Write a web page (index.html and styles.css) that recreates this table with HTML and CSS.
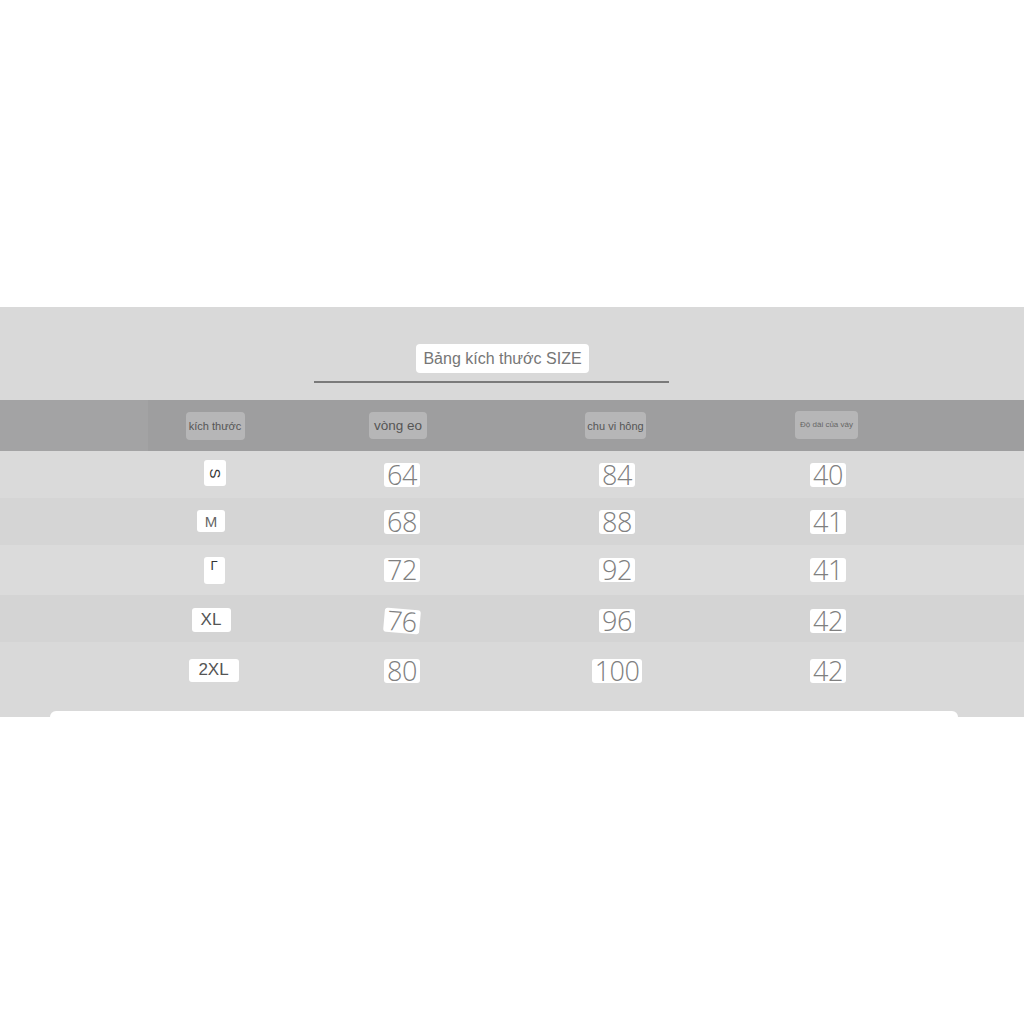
FILE: index.html
```html
<!DOCTYPE html>
<html lang="vi">
<head>
<meta charset="utf-8">
<title>Bảng kích thước SIZE</title>
<link rel="stylesheet" href="styles.css">
</head>
<body>
<div class="top-space"></div>
<section class="panel">
  <div class="title-area">
    <div class="title">Bảng kích thước SIZE</div>
    <div class="title-line"></div>
  </div>
  <div class="head">
    <div class="cell"><span class="pill p1">kích thước</span></div>
    <div class="cell"><span class="pill p2">vòng eo</span></div>
    <div class="cell"><span class="pill p3">chu vi hông</span></div>
    <div class="cell"><span class="pill p4">Độ dài của váy</span></div>
  </div>
  <div class="row r1">
    <div class="cell"><span class="size sz-s"><span class="rot-s">S</span></span></div>
    <div class="cell"><span class="num">64</span></div>
    <div class="cell"><span class="num">84</span></div>
    <div class="cell"><span class="num">40</span></div>
  </div>
  <div class="row r2">
    <div class="cell"><span class="size sz-m">M</span></div>
    <div class="cell"><span class="num">68</span></div>
    <div class="cell"><span class="num">88</span></div>
    <div class="cell"><span class="num">41</span></div>
  </div>
  <div class="row r3">
    <div class="cell"><span class="size sz-l"><span class="flip-l">L</span></span></div>
    <div class="cell"><span class="num">72</span></div>
    <div class="cell"><span class="num">92</span></div>
    <div class="cell"><span class="num">41</span></div>
  </div>
  <div class="row r4">
    <div class="cell"><span class="size sz-xl">XL</span></div>
    <div class="cell"><span class="num tilt">76</span></div>
    <div class="cell"><span class="num">96</span></div>
    <div class="cell"><span class="num">42</span></div>
  </div>
  <div class="row r5">
    <div class="cell"><span class="size sz-2xl">2XL</span></div>
    <div class="cell"><span class="num">80</span></div>
    <div class="cell"><span class="num">100</span></div>
    <div class="cell"><span class="num">42</span></div>
  </div>
  <div class="card-edge"></div>
</section>
</body>
</html>
```
FILE: styles.css
```css
html, body {
  margin: 0;
  padding: 0;
  background: #ffffff;
}
body {
  width: 1024px;
  height: 1024px;
  font-family: "Liberation Sans", Arial, sans-serif;
  overflow: hidden;
}
.top-space {
  height: 307px;
}
.panel {
  background: #d9d9d9;
  height: 410px;
  display: flex;
  flex-direction: column;
}
.title-area {
  height: 93px;
  display: flex;
  flex-direction: column;
  align-items: flex-start;
}
.title {
  margin-top: 37px;
  margin-left: 416px;
  width: 173px;
  height: 29px;
  background: #ffffff;
  border-radius: 4px;
  color: #767676;
  font-size: 16px;
  line-height: 29px;
  text-align: center;
}
.title-line {
  margin-top: 8px;
  margin-left: 314px;
  width: 355px;
  height: 2px;
  background: #7a7a7a;
}
.head, .row {
  display: grid;
  grid-template-columns: 186px 188px 242px 180px;
  padding-left: 122px;
}
.cell {
  display: flex;
  align-items: center;
  justify-content: center;
}
.head {
  height: 51px;
  background: linear-gradient(to right, #a3a3a4 0 148px, #9e9e9f 148px);
}
.pill {
  background: #b6b6b7;
  border-radius: 4px;
  color: #555555;
  display: inline-flex;
  align-items: center;
  justify-content: center;
}
.p1 { width: 59px; height: 28px; font-size: 11px; margin-top: 1px; }
.p2 { width: 58px; height: 27px; font-size: 13.5px; margin-left: -8px; }
.p3 { width: 61px; height: 27px; font-size: 11px; margin-left: -3px; }
.p4 { width: 63px; height: 28px; font-size: 8px; margin-top: -2px; margin-left: -3px; color: #666; }

.row { height: 47px; }
.r1 { background: #dadada; }
.r2 { background: #d5d5d5; }
.r3 { background: #dbdbdb; height: 50px; }
.r4 { background: #d4d4d4; }
.r5 { background: #d9d9d9; height: 58px; }
.r4 .num { margin-top: 5px; }

.num {
  background: #ffffff;
  border-radius: 3px;
  height: 24px;
  padding: 0 3px;
  color: #808080;
  font-family: "Open Sans", "Liberation Sans", sans-serif;
  font-weight: 350;
  font-size: 27px;
  line-height: 24px;
  letter-spacing: -0.5px;
  display: inline-flex;
  align-items: center;
}
.tilt {
  transform: rotate(5deg);
}
.size {
  background: #ffffff;
  border-radius: 3px;
  color: #555555;
  font-size: 17px;
  display: inline-flex;
  align-items: center;
  justify-content: center;
}
.sz-s { width: 22px; height: 26px; margin-top: -3px; }
.rot-s { display: inline-block; transform: rotate(90deg); color: #333; font-size: 15px; }
.sz-m { width: 28px; height: 22px; margin-left: -8px; font-size: 15px; margin-top: -1px; color: #666; }
.sz-l { width: 21px; height: 27px; margin-left: -2px; }
.flip-l { display: inline-block; transform: scaleY(-1); color: #333; font-size: 13px; margin-top: -10px; }
.sz-xl { width: 39px; height: 24px; margin-left: -8px; margin-top: 3px; font-size: 17px; }
.sz-2xl { width: 50px; height: 23px; margin-left: -3px; margin-top: -2px; font-size: 17px; }

.card-edge {
  margin-top: auto;
  margin-left: 50px;
  width: 908px;
  height: 6px;
  background: #ffffff;
  border-radius: 6px 6px 0 0;
}
```
